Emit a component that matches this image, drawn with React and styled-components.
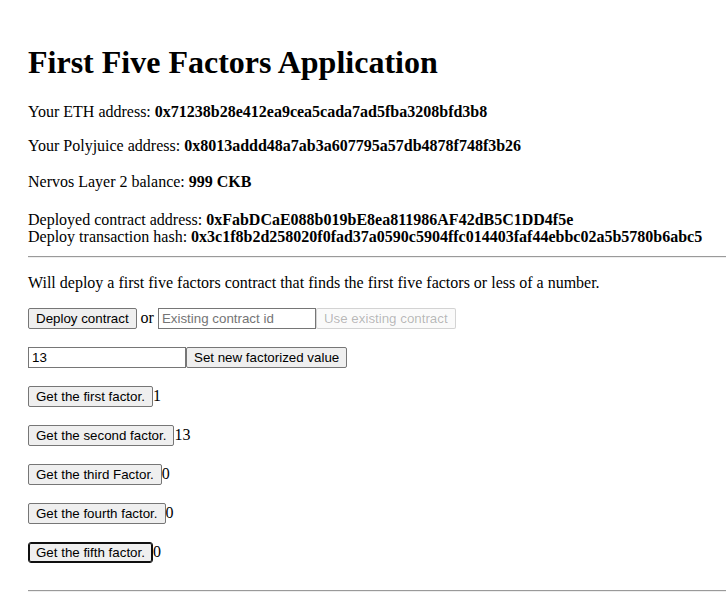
import React from 'react'
import styled, { createGlobalStyle } from 'styled-components'

const GlobalStyle = createGlobalStyle`
  body {
    margin: 0;
    background: #fff;
    color: #000;
    font-family: 'Liberation Serif', 'Times New Roman', serif;
    font-size: 16px;
  }
`

const Page = styled.div`
  padding: 23px 0 0 28px;
`

const Title = styled.h1`
  font-size: 32px;
  font-weight: bold;
  margin: 21.44px 0;
`

const Line = styled.p`
  margin: ${p => p.top || 16}px 0 ${p => p.bottom || 16}px;
  line-height: ${p => (p.tight ? '17px' : 'normal')};
`

const Rule = styled.hr`
  height: 0;
  margin: 8px 0;
  border: none;
  border-top: 1px solid #9a9a9a;
  border-bottom: 1px solid #eeeeee;
`

// rows of controls, separated by an empty line like <br /><br />
const Controls = styled.div`
  display: flow-root;
  padding-bottom: 1px;
`

const Row = styled.div`
  margin-bottom: 18px;
`

const Button = styled.button`
  font-family: Arial, 'Liberation Sans', sans-serif;
  font-size: 13.333px;
  line-height: normal;
  height: 21px;
  padding: 1px 7px;
  margin: 0;
  box-sizing: border-box;
  color: ${p => (p.disabled ? 'rgba(16, 16, 16, 0.3)' : '#000')};
  background: ${p => (p.disabled ? 'rgba(239, 239, 239, 0.3)' : '#efefef')};
  border: 1px solid
    ${p => (p.disabled ? 'rgba(118, 118, 118, 0.3)' : p.focused ? '#101010' : '#767676')};
  border-radius: ${p => (p.focused ? '3px' : '2px')};
  box-shadow: ${p => (p.focused ? 'inset 0 0 0 1px #101010' : 'none')};
`

const TextInput = styled.input`
  font-family: Arial, 'Liberation Sans', sans-serif;
  font-size: 13.333px;
  width: 158px;
  height: 21px;
  box-sizing: border-box;
  padding: 1px 3px;
  margin: 0;
  border: 1px solid #767676;
  border-radius: 0;
  color: #000;
  &::placeholder {
    color: #757575;
  }
`

const factors = [
  { label: 'Get the first factor.', value: '1' },
  { label: 'Get the second factor.', value: '13' },
  { label: 'Get the third Factor.', value: '0' },
  { label: 'Get the fourth factor.', value: '0' },
  { label: 'Get the fifth factor.', value: '0', focused: true },
]

export default function App() {
  return (
    <Page>
      <GlobalStyle />
      <Title>First Five Factors Application</Title>
      <Line>
        Your ETH address: <b>0x71238b28e412ea9cea5cada7ad5fba3208bfd3b8</b>
      </Line>
      <Line>
        Your Polyjuice address: <b>0x8013addd48a7ab3a607795a57db4878f748f3b26</b>
      </Line>
      <Line top={18}>
        Nervos Layer 2 balance: <b>999 CKB</b>
      </Line>
      <Line top={20} bottom={11} tight>
        Deployed contract address: <b>0xFabDCaE088b019bE8ea811986AF42dB5C1DD4f5e</b>
        <br />
        Deploy transaction hash:{' '}
        <b>0x3c1f8b2d258020f0fad37a0590c5904ffc014403faf44ebbc02a5b5780b6abc5</b>
      </Line>
      <Rule />
      <Line>
        Will deploy a first five factors contract that finds the first five factors or less of a
        number.
      </Line>
      <Controls>
        <Row>
          <Button>Deploy contract</Button> or{' '}
          <TextInput placeholder="Existing contract id" />
          <Button disabled>Use existing contract</Button>
        </Row>
        <Row>
          <TextInput defaultValue="13" />
          <Button>Set new factorized value</Button>
        </Row>
        {factors.map(f => (
          <Row key={f.label}>
            <Button focused={f.focused}>{f.label}</Button>
            {f.value}
          </Row>
        ))}
      </Controls>
      <Rule />
    </Page>
  )
}
